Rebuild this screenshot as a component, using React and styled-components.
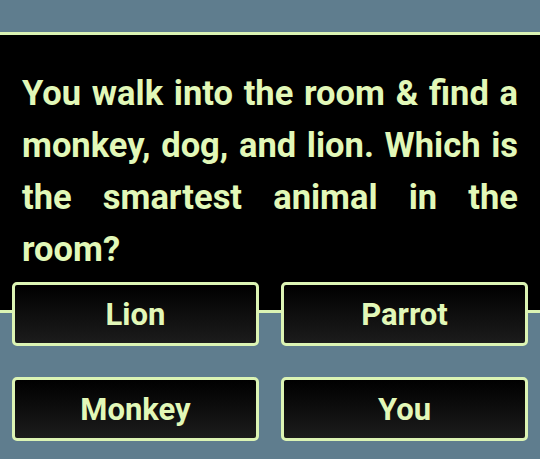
import React from "react";
import styled, { createGlobalStyle } from "styled-components";

const Global = createGlobalStyle`
  html, body { margin: 0; padding: 0; background: #5f7d8e; }
  body { font-family: Roboto, "Liberation Sans", sans-serif; }
  * { box-sizing: border-box; }
`;

const Page = styled.div`
  width: 540px;
  height: 459px;
  padding-top: 32px;
  background: #5f7d8e;
  overflow: hidden;
`;

const QuestionPanel = styled.section`
  background: #000;
  border-top: 3px solid #dcf4b4;
  border-bottom: 3px solid #dcf4b4;
  padding: 32px 22px 35px;
`;

const Question = styled.p`
  margin: 0;
  color: #e2f8b8;
  font-family: Roboto, "Liberation Sans", sans-serif;
  font-weight: 700;
  font-size: 34.5px;
  line-height: 52px;
  text-align: justify;
`;

const Answers = styled.div`
  display: grid;
  grid-template-columns: 1fr 1fr;
  column-gap: 22px;
  row-gap: 31px;
  padding: 0 12px;
  margin-top: -31px;
`;

const AnswerButton = styled.button`
  height: 64px;
  border: 3px solid #dcf4b4;
  border-radius: 5px;
  background: linear-gradient(180deg, #000 0%, #1c1c1c 100%);
  color: #e2f8b8;
  font-family: Roboto, "Liberation Sans", sans-serif;
  font-weight: 700;
  font-size: 31px;
  display: flex;
  align-items: center;
  justify-content: center;
  padding: 0;
  cursor: pointer;
`;

const answers = ["Lion", "Parrot", "Monkey", "You"];

export default function App() {
  return (
    <Page>
      <Global />
      <QuestionPanel>
        <Question>
          You walk into the room &amp; find a monkey, dog, and lion. Which is
          the smartest animal in the room?
        </Question>
      </QuestionPanel>
      <Answers>
        {answers.map((a) => (
          <AnswerButton key={a}>{a}</AnswerButton>
        ))}
      </Answers>
    </Page>
  );
}
